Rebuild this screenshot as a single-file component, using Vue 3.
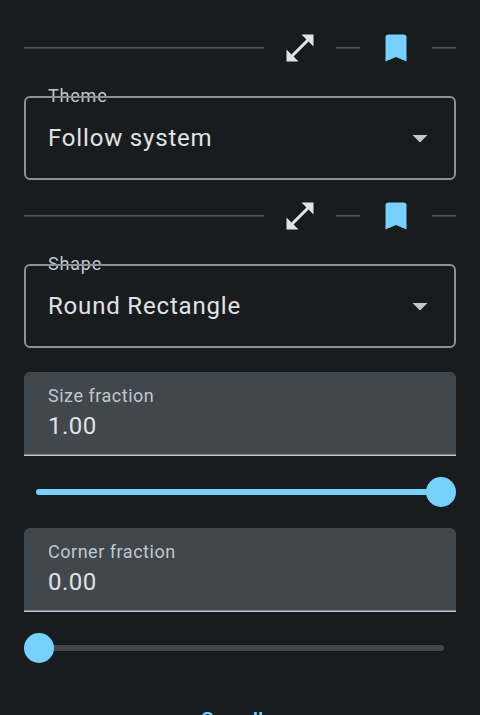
<script setup>
const selects = [
  { label: 'Theme', value: 'Follow system' },
  { label: 'Shape', value: 'Round Rectangle' },
]
const sliders = [
  { label: 'Size fraction', fraction: 1 },
  { label: 'Corner fraction', fraction: 0 },
]
</script>

<template>
  <main class="screen">
    <section v-for="item in selects" :key="item.label">
      <div class="divider-row">
        <i class="rule grow"></i>
        <svg class="icon expand" viewBox="0 0 24 24"><path d="M21 11V3h-8l3.29 3.29-10 10L3 13v8h8l-3.29-3.29 10-10z" /></svg>
        <i class="rule"></i>
        <svg class="icon bookmark" viewBox="0 0 24 24"><path d="M17 3H7a2 2 0 0 0-2 2v16l7-3 7 3V5a2 2 0 0 0-2-2z" /></svg>
        <i class="rule"></i>
      </div>
      <div class="select">
        <span class="label float">{{ item.label }}</span>
        <span class="value">{{ item.value }}</span>
        <svg class="arrow" viewBox="0 0 24 24"><path d="M7 10l5 5 5-5z" /></svg>
      </div>
    </section>
    <section v-for="item in sliders" :key="item.label" class="slider-group">
      <div class="filled">
        <span class="label">{{ item.label }}</span>
        <span class="value">{{ item.fraction.toFixed(2) }}</span>
      </div>
      <div class="slider">
        <div class="track"><div class="active" :style="{ width: item.fraction * 100 + '%' }"></div></div>
        <div class="thumb" :class="{ end: item.fraction === 1 }"></div>
      </div>
    </section>
    <button class="action">See all</button>
  </main>
</template>

<style>
html, body { margin: 0; background: #191c1e; overflow: hidden; }
</style>

<style scoped>
.screen {
  position: relative;
  z-index: 0;
  box-sizing: border-box;
  width: 480px;
  height: 715px;
  padding: 0 24px;
  overflow: hidden;
  background: #191c1e;
  color: #e1e2e5;
  font-family: Roboto, sans-serif;
}
.divider-row { display: flex; align-items: center; height: 72px; padding-top: 12px; }
section + section .divider-row { padding-top: 0; }
.rule {
  width: 24px;
  height: 2px;
  background: linear-gradient(#515456 50%, #3b3e40 50%);
}
.grow { flex: 1; }
.icon { width: 36px; height: 36px; margin: 0 18px; flex: none; }
.expand { fill: #e1e2e5; }
.bookmark { fill: #76d1ff; }
.select {
  position: relative;
  box-sizing: border-box;
  display: flex;
  align-items: center;
  justify-content: space-between;
  height: 84px;
  margin-top: 12px;
  padding: 0 16px 0 22px;
  border: 2px solid #8b9297;
  border-radius: 6px;
}
.label { color: #c0c7cd; font-size: 18px; line-height: 24px; letter-spacing: 0.52px; }
.float { position: absolute; left: 22px; top: -14px; z-index: -1; letter-spacing: 0.8px; }
.value { font-size: 24px; line-height: 36px; letter-spacing: 0.82px; }
.filled .value { letter-spacing: 0.5px; }
.arrow { width: 36px; height: 36px; fill: #c0c7cd; }
.slider-group { margin-top: 24px; }
.slider-group + .slider-group { margin-top: 0; }
.filled {
  box-sizing: border-box;
  display: flex;
  flex-direction: column;
  height: 84px;
  padding: 12px 24px 0;
  border-radius: 6px 6px 0 0;
  background: linear-gradient(#41484d 82px, #80878c 82px, #80878c 83px, #c0c7cd 83px);
}
.slider { position: relative; display: flex; align-items: center; height: 72px; padding: 0 12px; }
.track { flex: 1; height: 6px; border-radius: 3px; background: #41484d; overflow: hidden; }
.active { height: 100%; background: #76d1ff; }
.thumb {
  position: absolute;
  left: 0;
  width: 30px;
  height: 30px;
  border-radius: 50%;
  background: #76d1ff;
}
.thumb.end { left: auto; right: 0; }
.action {
  display: block;
  margin: 21px 0 0 177px;
  padding: 0;
  border: 0;
  background: none;
  color: #76d1ff;
  font: 500 21px/30px Roboto, sans-serif;
  letter-spacing: 0;
  white-space: nowrap;
}
</style>
